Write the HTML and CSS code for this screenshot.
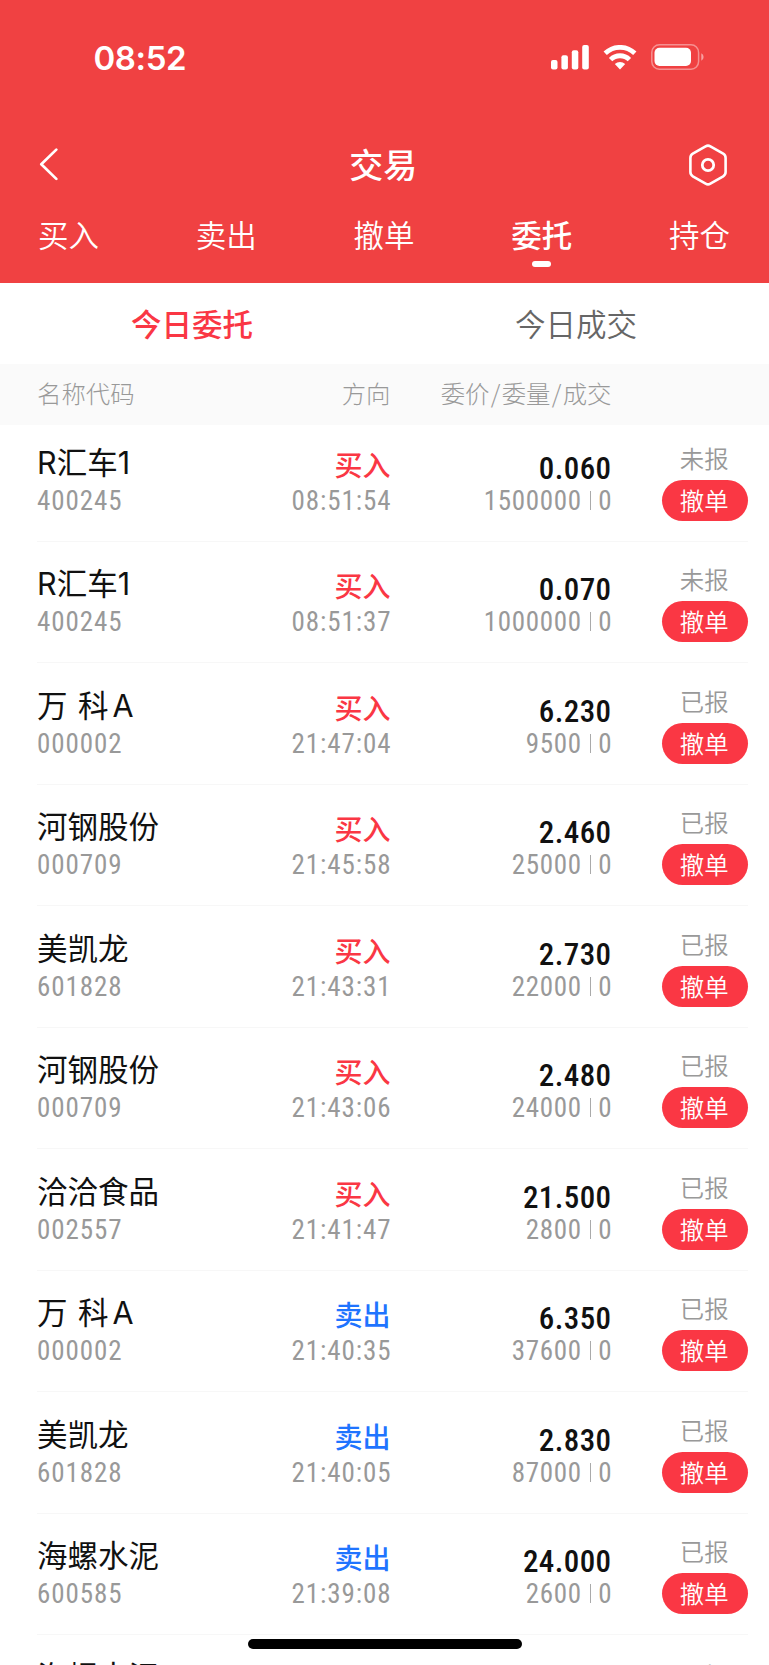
FILE: index.html
```
<!DOCTYPE html>
<html lang="zh-CN">
<head>
  <meta charset="UTF-8" />
  <meta name="viewport" content="width=device-width, initial-scale=1.0"/>
  <title>交易</title>
  <link rel="stylesheet" href="styles.css">
</head>
<body>

  <header class="top">
    <div class="status-bar">
      <span class="clock">08:52</span>
      <div class="status-icons">
        <svg width="38" height="25" viewBox="0 0 38 25" fill="#fff">
          <rect x="0" y="15" width="6.5" height="9.5" rx="2"/>
          <rect x="10.4" y="10.3" width="6.5" height="14.2" rx="2"/>
          <rect x="20.8" y="5.2" width="6.5" height="19.3" rx="2"/>
          <rect x="31.2" y="0" width="6.6" height="24.5" rx="2"/>
        </svg>
        <svg class="wifi" width="34" height="25" viewBox="0 0 34 25" fill="none" stroke="#fff" stroke-width="4.8">
          <path d="M2.2 8.3a21.4 21.4 0 0 1 29.6 0"/>
          <path d="M7.6 14.6a13.4 13.4 0 0 1 18.8 0"/>
          <path d="M11.8 19a8 8 0 0 1 10.4 0L17 24.4z" fill="#fff" stroke="none"/>
        </svg>
        <svg width="53" height="26" viewBox="0 0 53 26">
          <rect x="0.8" y="0.8" width="46.8" height="24.4" rx="7.6" fill="none" stroke="#fff" stroke-opacity=".42" stroke-width="1.5"/>
          <rect x="3.5" y="3.8" width="36.5" height="18.2" rx="5" fill="#fff"/>
          <path d="M50.3 9.3v7.4q2.3-1 2.3-3.7t-2.3-3.7z" fill="#fff" fill-opacity=".5"/>
        </svg>
      </div>
    </div>

    <div class="nav">
      <svg width="20" height="34" viewBox="0 0 20 34" fill="none" stroke="#fff" stroke-width="2.7" stroke-linecap="round" stroke-linejoin="round">
        <path d="M17.3 1.6L2.3 16.3l15 14.600"/>
      </svg>
      <h1>交易</h1>
      <svg width="38" height="42" viewBox="0 0 38 42" fill="none" stroke="#fff" stroke-width="2.6">
        <path d="M16.6 2.3q2.4-1.4 4.8 0L34.2 9.7q2.4 1.4 2.4 4.2v14.2q0 2.8-2.4 4.2L21.4 39.7q-2.4 1.4-4.8 0L3.8 32.3q-2.4-1.4-2.4-4.2V13.9q0-2.8 2.4-4.2z"/>
        <circle cx="19" cy="21" r="5.7" stroke-width="2.8"/>
      </svg>
    </div>

    <nav class="tabs">
      <a>买入</a>
      <a>卖出</a>
      <a>撤单</a>
      <a class="active">委托</a>
      <a>持仓</a>
    </nav>
  </header>

  <div class="sub-tabs">
    <a class="active">今日委托</a>
    <a>今日成交</a>
  </div>

  <div class="table-head">
    <span>名称代码</span>
    <span class="right">方向</span>
    <span class="right">委价<b>/</b>委量<b>/</b>成交</span>
  </div>

  <main class="orders">
    <div class="order">
      <div><p class="name">R汇车1</p><p class="num">400245</p></div>
      <div class="right"><p class="side buy">买入</p><p class="num">08:51:54</p></div>
      <div class="right"><p class="price">0.060</p><p class="num qty">1500000<i></i>0</p></div>
      <div class="action"><p>未报</p><button>撤单</button></div>
    </div>
    <div class="order">
      <div><p class="name">R汇车1</p><p class="num">400245</p></div>
      <div class="right"><p class="side buy">买入</p><p class="num">08:51:37</p></div>
      <div class="right"><p class="price">0.070</p><p class="num qty">1000000<i></i>0</p></div>
      <div class="action"><p>未报</p><button>撤单</button></div>
    </div>
    <div class="order">
      <div><p class="name">万 科<span>A</span></p><p class="num">000002</p></div>
      <div class="right"><p class="side buy">买入</p><p class="num">21:47:04</p></div>
      <div class="right"><p class="price">6.230</p><p class="num qty">9500<i></i>0</p></div>
      <div class="action"><p>已报</p><button>撤单</button></div>
    </div>
    <div class="order">
      <div><p class="name">河钢股份</p><p class="num">000709</p></div>
      <div class="right"><p class="side buy">买入</p><p class="num">21:45:58</p></div>
      <div class="right"><p class="price">2.460</p><p class="num qty">25000<i></i>0</p></div>
      <div class="action"><p>已报</p><button>撤单</button></div>
    </div>
    <div class="order">
      <div><p class="name">美凯龙</p><p class="num">601828</p></div>
      <div class="right"><p class="side buy">买入</p><p class="num">21:43:31</p></div>
      <div class="right"><p class="price">2.730</p><p class="num qty">22000<i></i>0</p></div>
      <div class="action"><p>已报</p><button>撤单</button></div>
    </div>
    <div class="order">
      <div><p class="name">河钢股份</p><p class="num">000709</p></div>
      <div class="right"><p class="side buy">买入</p><p class="num">21:43:06</p></div>
      <div class="right"><p class="price">2.480</p><p class="num qty">24000<i></i>0</p></div>
      <div class="action"><p>已报</p><button>撤单</button></div>
    </div>
    <div class="order">
      <div><p class="name">洽洽食品</p><p class="num">002557</p></div>
      <div class="right"><p class="side buy">买入</p><p class="num">21:41:47</p></div>
      <div class="right"><p class="price">21.500</p><p class="num qty">2800<i></i>0</p></div>
      <div class="action"><p>已报</p><button>撤单</button></div>
    </div>
    <div class="order">
      <div><p class="name">万 科<span>A</span></p><p class="num">000002</p></div>
      <div class="right"><p class="side sell">卖出</p><p class="num">21:40:35</p></div>
      <div class="right"><p class="price">6.350</p><p class="num qty">37600<i></i>0</p></div>
      <div class="action"><p>已报</p><button>撤单</button></div>
    </div>
    <div class="order">
      <div><p class="name">美凯龙</p><p class="num">601828</p></div>
      <div class="right"><p class="side sell">卖出</p><p class="num">21:40:05</p></div>
      <div class="right"><p class="price">2.830</p><p class="num qty">87000<i></i>0</p></div>
      <div class="action"><p>已报</p><button>撤单</button></div>
    </div>
    <div class="order">
      <div><p class="name">海螺水泥</p><p class="num">600585</p></div>
      <div class="right"><p class="side sell">卖出</p><p class="num">21:39:08</p></div>
      <div class="right"><p class="price">24.000</p><p class="num qty">2600<i></i>0</p></div>
      <div class="action"><p>已报</p><button>撤单</button></div>
    </div>
    <!-- next row, scrolled under the bottom edge -->
    <div class="order peek">
      <div><p class="name">海螺水泥</p></div>
      <div class="action"><p>已报</p></div>
    </div>
  </main>

  <div class="home-bar"></div>

</body>
</html>
```
FILE: styles.css
```
* {
  box-sizing: border-box;
  margin: 0;
  padding: 0;
}

body {
  height: 1665px;
  overflow: hidden;
  background: #fff;
  color: #111;
  font-family: "Noto Sans CJK SC", sans-serif;
}

.right {
  text-align: right;
}

/* red header */
.top {
  height: 283px;
  background: #f04142;
  color: #fff;
}

.status-bar {
  height: 114px;
  padding: 0 65px 0 93.5px;
  display: flex;
  align-items: center;
  justify-content: space-between;
}

.clock {
  padding-top: 1px;
  font-family: Inter, sans-serif;
  font-size: 33px;
  font-weight: 600;
  line-height: 40px;
  letter-spacing: -0.4px;
}

.status-icons {
  display: flex;
  align-items: center;
}

.wifi {
  margin: 0 14px 0 14px;
}

.nav {
  height: 102px;
  padding: 0 42.5px 0 39px;
  display: flex;
  align-items: center;
  justify-content: space-between;
}

.nav h1 {
  margin: -2px 0 0 19px;
  font-size: 34px;
  font-weight: 500;
  line-height: 40px;
}

.tabs {
  padding: 0 39px 0 38px;
  display: flex;
  justify-content: space-between;
  font-size: 30.5px;
  font-weight: 350;
  line-height: 36px;
}

.tabs a.active {
  font-weight: 500;
}

.tabs a.active::after {
  content: "";
  display: block;
  width: 19px;
  height: 6px;
  margin: 9px auto 0;
  border-radius: 3px;
  background: #fff;
}

.sub-tabs {
  height: 81px;
  padding-right: 1px;
  display: flex;
  font-size: 30.5px;
  font-weight: 350;
  line-height: 80px;
  text-align: center;
  color: #666;
}

.sub-tabs a {
  flex: 1;
}

.sub-tabs a.active {
  color: #fa3744;
  font-weight: 500;
}

.table-head,
.order {
  display: grid;
  grid-template-columns: 175px 178.5px 221px 136.5px;
  padding-left: 37px;
}

.table-head {
  height: 60.5px;
  background: #fafafa;
  color: #999;
  font-size: 24.4px;
  font-weight: 300;
  line-height: 58px;
}

.table-head b {
  margin: 0 1.3px;
  font-weight: inherit;
}

/* order list */
.order {
  width: 711px;
  height: 121.5px;
  margin-left: 37px;
  padding: 0 0 20px;
  align-items: end;
  border-bottom: 1.5px solid #f7f7f7;
}

.order:first-child {
  height: 117px;
}

.order > div {
  padding-bottom: 2px;
}

.name {
  font-family: Inter, "Noto Sans CJK SC", sans-serif;
  font-size: 30.5px;
  font-weight: 400;
  line-height: 38px;
  word-spacing: 2px;
  padding-bottom: 1px;
}

.name span {
  margin-left: 4px;
}

.side {
  font-size: 28px;
  font-weight: 500;
  line-height: 33px;
  padding-bottom: 2px;
}

.buy {
  color: #fa3744;
}

.sell {
  color: #1f74ff;
}

.price {
  font-family: Roboto, sans-serif;
  font-stretch: 75%;
  font-size: 31px;
  font-weight: 500;
  line-height: 29px;
  letter-spacing: 0.4px;
}

.num {
  color: #999;
  font-family: Roboto, sans-serif;
  font-stretch: 75%;
  font-size: 27px;
  line-height: 36px;
  letter-spacing: 0.9px;
}

/* drop the trailing letter-space so right edges line up */
.right .num {
  margin-right: -0.9px;
}

.right .qty {
  letter-spacing: 0.7px;
}

.num i {
  display: inline-block;
  width: 1.5px;
  height: 19px;
  margin: 0 7px 0 8px;
  background: #aaa;
}

.order > .action {
  width: 86px;
  margin-left: auto;
  padding-bottom: 0;
  text-align: center;
}

.action p {
  color: #999;
  font-size: 24.4px;
  font-weight: 350;
  line-height: 38px;
  padding: 0 1.5px 3px 0;
}

.action button {
  display: block;
  width: 86px;
  height: 41px;
  padding: 0 1.5px 2px 0;
  border: none;
  border-radius: 21px;
  background: #fa3744;
  color: #fff;
  font-family: inherit;
  font-size: 24.4px;
  font-weight: 350;
  line-height: 39px;
}

.order.peek {
  display: flex;
  height: 30px;
  padding: 0;
  align-items: flex-start;
  overflow: hidden;
  border: none;
}

.peek .name {
  padding-top: 23px;
}

.peek .action p {
  padding-top: 21px;
}

.home-bar {
  position: fixed;
  left: 247.5px;
  bottom: 16px;
  width: 274px;
  height: 10px;
  border-radius: 5px;
  background: #000;
}
```
